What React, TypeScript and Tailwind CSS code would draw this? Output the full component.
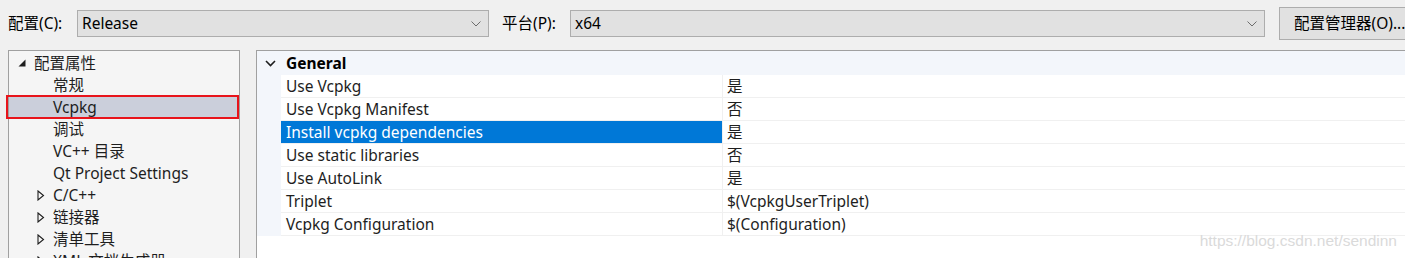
import React from 'react';

const font = { fontFamily: '"Noto Sans", "Noto Sans CJK SC", sans-serif' };

const Chevron = ({ className = '' }: { className?: string }) => (
  <svg className={className} width="10" height="6" viewBox="0 0 10 6" fill="none">
    <path d="M0.5 0.5 L5 5 L9.5 0.5" stroke="currentColor" strokeWidth="1" />
  </svg>
);

const Combo = ({ value, width }: { value: string; width: string }) => (
  <div className={`${width} shrink-0 h-[27px] flex items-center justify-between bg-[#e1e1e1] border border-[#adadad] pl-[4px] pr-[7px]`}>
    <span className="text-[15.5px] text-black leading-none pt-[1px]">{value}</span>
    <Chevron className="text-[#6d6d6d]" />
  </div>
);

const ExpandedIcon = () => (
  <svg width="8" height="8" viewBox="0 0 8 8" className="mr-[8px]">
    <path d="M7.5 0.5 L7.5 7.5 L0.5 7.5 Z" fill="#1e1e1e" />
  </svg>
);

const CollapsedIcon = () => (
  <svg width="8" height="11" viewBox="0 0 8 11" className="mr-[8px]">
    <path d="M1 1 L6.5 5.5 L1 10 Z" fill="none" stroke="#1e1e1e" strokeWidth="1.1" />
  </svg>
);

type TreeItem = { label: string; level: 0 | 1 | 2; icon?: 'open' | 'closed'; selected?: boolean };

const tree: TreeItem[] = [
  { label: '配置属性', level: 0, icon: 'open' },
  { label: '常规', level: 2 },
  { label: 'Vcpkg', level: 2, selected: true },
  { label: '调试', level: 2 },
  { label: 'VC++ 目录', level: 2 },
  { label: 'Qt Project Settings', level: 2 },
  { label: 'C/C++', level: 1, icon: 'closed' },
  { label: '链接器', level: 1, icon: 'closed' },
  { label: '清单工具', level: 1, icon: 'closed' },
  { label: 'XML 文档生成器', level: 1, icon: 'closed' },
];

const props = [
  { name: 'Use Vcpkg', value: '是' },
  { name: 'Use Vcpkg Manifest', value: '否' },
  { name: 'Install vcpkg dependencies', value: '是', selected: true },
  { name: 'Use static libraries', value: '否' },
  { name: 'Use AutoLink', value: '是' },
  { name: 'Triplet', value: '$(VcpkgUserTriplet)' },
  { name: 'Vcpkg Configuration', value: '$(Configuration)' },
];

const TreeRow = ({ item }: { item: TreeItem }) => {
  const pad = item.level === 0 ? 'pl-[9px]' : item.level === 1 ? 'pl-[28px]' : 'pl-[44px]';
  return (
    <div className={`relative h-[22px] flex items-center ${pad} ${item.selected ? 'bg-[#cbcfdb]' : ''}`}>
      {item.icon === 'open' && <ExpandedIcon />}
      {item.icon === 'closed' && <CollapsedIcon />}
      <span className="text-[15.5px] text-[#1e1e1e] whitespace-nowrap leading-none pt-[2px]">{item.label}</span>
      {item.selected && (
        <div className="absolute left-[-3px] right-[0px] top-[-1px] bottom-[-1px] border-2 border-[#e8141b]" />
      )}
    </div>
  );
};

export default function App() {
  return (
    <div className="w-[1405px] h-[258px] bg-[#f0f0f0] overflow-hidden" style={font}>
      <div className="flex items-center h-[45px] pl-[8px] pt-[2px]">
        <span className="text-[15.5px] text-black w-[69px] shrink-0 whitespace-nowrap">配置(C):</span>
        <Combo value="Release" width="w-[412px]" />
        <span className="text-[15.5px] text-black ml-[13px] w-[68px] shrink-0 whitespace-nowrap">平台(P):</span>
        <Combo value="x64" width="w-[695px]" />
        <div className="ml-[14px] w-[140px] h-[33px] shrink-0 flex items-center bg-[#e1e1e1] border border-[#adadad] pl-[14px]">
          <span className="text-[15.5px] text-black whitespace-nowrap">配置管理器(O)...</span>
        </div>
      </div>

      <div className="flex mt-[5px] h-[220px]">
        <div className="ml-[8px] w-[232px] shrink-0 border border-[#a0a0a0] bg-[#f5f5f5] pt-[1px]">
          {tree.map((item) => (
            <TreeRow key={item.label} item={item} />
          ))}
        </div>

        <div className="ml-[16px] w-[1170px] shrink-0 border border-[#a0a0a0] bg-white">
          <div className="h-[24px] flex items-center bg-[#f3f6fb]">
            <div className="w-[24px] flex justify-center pl-[2px]">
              <svg width="11" height="7" viewBox="0 0 11 7" fill="none">
                <path d="M1 1 L5.5 5.5 L10 1" stroke="#1e1e1e" strokeWidth="1.6" />
              </svg>
            </div>
            <span className="ml-[5px] text-[15.5px] font-bold text-black leading-none pt-[1px]">General</span>
          </div>
          <div className="flex">
            <div className="w-[24px] shrink-0 bg-[#f3f6fb]" />
            <div className="flex-1">
              {props.map((p) => (
                <div key={p.name} className="flex h-[23px] border-b border-[#f0f0f0]">
                  <div
                    className={`w-[442px] shrink-0 flex items-center pl-[5px] border-r border-[#f0f0f0] ${
                      p.selected ? 'bg-[#0078d7] text-white' : 'text-[#1e1e1e]'
                    }`}
                  >
                    <span className="text-[15.5px] leading-none whitespace-nowrap pt-[2px]">{p.name}</span>
                  </div>
                  <div className="flex-1 flex items-center justify-between pl-[4px]">
                    <span className="text-[15.5px] leading-none text-[#1e1e1e] whitespace-nowrap pt-[2px]">{p.value}</span>
                    {p.selected && (
                      <div className="w-[18px] h-[22px] mr-[-9px] bg-[#e1e1e1] border border-[#adadad] flex items-center pl-[3px]">
                        <svg width="5" height="4" viewBox="0 0 5 4">
                          <path d="M0 0 L5 0 L2.5 3.5 Z" fill="#333" />
                        </svg>
                      </div>
                    )}
                  </div>
                </div>
              ))}
            </div>
          </div>
          <div className="flex justify-end pr-[28px] mt-[-3px]">
            <span
              className="text-[15.5px] leading-[16px] text-[#dadada]"
              style={{ fontFamily: '"Liberation Sans", Arial, sans-serif' }}
            >
              https://blog.csdn.net/sendinn
            </span>
          </div>
        </div>
      </div>
    </div>
  );
}
